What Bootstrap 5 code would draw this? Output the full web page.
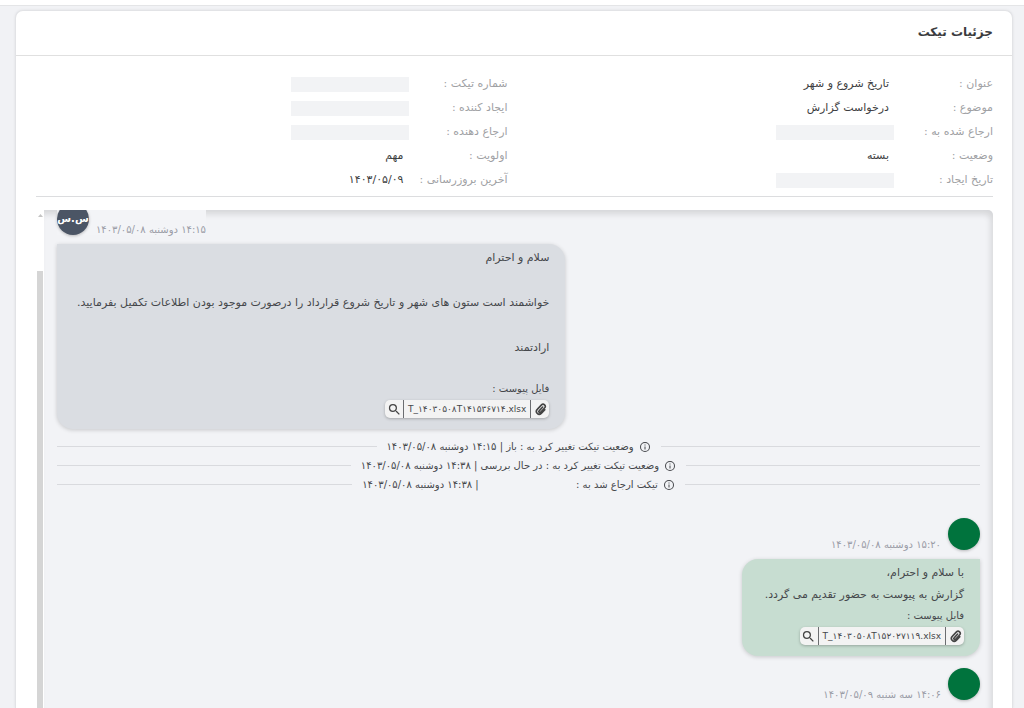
<!DOCTYPE html>
<html lang="fa" dir="rtl">
<head>
<meta charset="utf-8">
<meta name="viewport" content="width=device-width, initial-scale=1">
<title>جزئیات تیکت</title>
<link rel="stylesheet" href="https://cdn.jsdelivr.net/npm/bootstrap@5.3.0/dist/css/bootstrap.min.css">
<style>
  body { font-family: "DejaVu Sans", sans-serif; font-size: 11px; line-height: 22px; color: #45474b; background: #f1f2f5; }
  .topbar { height: 6px; background: #fff; border-bottom: 1px solid #e4e5e7; }
  .ticket { margin: 4px 11px 0 15px; border: 1px solid #e2e3e6; border-bottom: 0; border-radius: 8px 8px 0 0; box-shadow: 0 0 3px rgba(0,0,0,.08); min-height: 0; }
  .ticket-head { height: 45px; padding: 0 19px 2px; border-bottom: 1px solid #e0e0e0; }
  .ticket-head h1 { font-size: 12px; line-height: 20px; font-weight: 700; color: #3a3b3e; }
  .ticket-body { padding: 16px 19px 0 20px; min-height: 0; }
  .info { padding-bottom: 4px; border-bottom: 1px solid #dcdddf; }
  .info-col + .info-col { padding-right: 7px; }
  .info-col dl div { height: 24px; }
  .info dt { width: 104px; font-weight: 400; font-size: 11px; color: #a0a1a4; }
  .info dd { margin: 0; font-size: 11px; color: #3d3e41; }
  .hidden-value { width: 118px; height: 15px; background: #f2f3f5; margin-right: -5px !important; }
  .thread { margin-top: 13px; min-height: 0; }
  .chat { background: #f2f3f6; border-radius: 0 5px 0 0; box-shadow: inset -3px 5px 6px -1px rgba(0,0,0,.12); padding: 0 13px; }
  .rail { width: 8px; padding-top: 4px; }
  .rail .thumb { width: 6px; margin-top: 54px; background: #d5d5d5; }
  .avatar { width: 32px; height: 32px; background: #00733d; box-shadow: 0 1px 3px rgba(0,0,0,.25); }
  .avatar-dark { background: #4b5565; color: #fff; font-size: 10px; font-weight: 700; line-height: 20px; }
  .msg-head { gap: 7px; }
  .clipped { margin-top: -7px; background: #f3f4f7; }
  .stamp { font-size: 10px; line-height: 10px; color: #9a9ca6; }
  .clipped .stamp, .out-group .stamp { margin-bottom: 0; }
  .bubble { width: fit-content; margin-top: 9px; padding: 3px 16px 11px; box-shadow: 0 1px 4px rgba(0,0,0,.18); }
  .bubble-in { background: #dadde2; border-radius: 0 16px 16px 16px; padding-left: 20px; }
  .bubble-out { background: #c7ddd1; border-radius: 16px 0 16px 16px; padding-left: 23px; }
  .bubble p { margin: 0; font-size: 11px; }
  .bubble-in p { margin-bottom: 23px; }
  .bubble-in p:last-of-type { margin-bottom: 20px; }
  .file-label { font-size: 10px; line-height: 20px; }
  .file { width: fit-content; height: 18px; margin-top: 1px; background: #f3f3f3; border-radius: 5px; box-shadow: 0 1px 3px rgba(0,0,0,.25); overflow: hidden; }
  .file button { border: 0; background: none; padding: 0; width: 18px; height: 18px; color: #444; }
  .file a { font-size: 9px; line-height: 18px; padding: 0 4px; color: #45474b; text-decoration: none; border: solid #6b6d70; border-width: 0 1px; }
  .events { margin-top: 8px; }
  .event { height: 19px; font-size: 10px; gap: 10px; }
  .event::before, .event::after { content: ""; flex: 1; border-top: 1px solid #d9dade; }
  .event span { gap: 5px; }
  .redacted { display: inline-block; width: 91px; }
  .out-group { margin-top: 24px; }
  .out-group + .out-group { margin-top: 12px; }
</style>
</head>
<body class="vh-100 overflow-hidden d-flex flex-column">
<svg class="d-none">
  <symbol id="clip" viewBox="0 0 24 24"><path fill="none" stroke="currentColor" stroke-width="2.900" stroke-linecap="round" d="M16 7.500l-6.500 7a1.800 1.800 0 0 0 2.600 2.600L19.500 9.200a4 4 0 0 0-5.700-5.700L6 11.800a5.200 5.200 0 0 0 7.400 7.400L20 12.500"/></symbol>
  <symbol id="search" viewBox="0 0 24 24"><path fill="currentColor" d="M15.500 14h-.79l-.28-.27A6.470 6.470 0 0 0 16 9.500 6.500 6.500 0 1 0 9.500 16c1.610 0 3.090-.59 4.230-1.570l.27.28v.79l5 4.990L20.490 19l-4.990-5zm-6 0C7.010 14 5 11.990 5 9.500S7.010 5 9.500 5 14 7.010 14 9.500 11.990 14 9.500 14z"/></symbol>
  <symbol id="info" viewBox="0 0 24 24"><path fill="currentColor" d="M11 7h2v2h-2zm0 4h2v6h-2zm1-9a10 10 0 1 0 0 20 10 10 0 0 0 0-20zm0 18a8 8 0 1 1 0-16 8 8 0 0 1 0 16z"/></symbol>
</svg>
<header class="topbar flex-shrink-0"></header>
<main class="ticket bg-white flex-grow-1 d-flex flex-column">
  <div class="ticket-head d-flex align-items-center flex-shrink-0"><h1 class="m-0">جزئیات تیکت</h1></div>
  <div class="ticket-body flex-grow-1 d-flex flex-column">
    <section class="info row g-0 flex-shrink-0">
      <div class="info-col col-6"><dl class="m-0">
        <div class="d-flex align-items-center"><dt>عنوان :</dt><dd>تاریخ شروع و شهر</dd></div>
        <div class="d-flex align-items-center"><dt>موضوع :</dt><dd>درخواست گزارش</dd></div>
        <div class="d-flex align-items-center"><dt>ارجاع شده به :</dt><dd class="hidden-value"></dd></div>
        <div class="d-flex align-items-center"><dt>وضعیت :</dt><dd>بسته</dd></div>
        <div class="d-flex align-items-center"><dt>تاریخ ایجاد :</dt><dd class="hidden-value"></dd></div>
      </dl></div>
      <div class="info-col col-6"><dl class="m-0">
        <div class="d-flex align-items-center"><dt>شماره تیکت :</dt><dd class="hidden-value"></dd></div>
        <div class="d-flex align-items-center"><dt>ایجاد کننده :</dt><dd class="hidden-value"></dd></div>
        <div class="d-flex align-items-center"><dt>ارجاع دهنده :</dt><dd class="hidden-value"></dd></div>
        <div class="d-flex align-items-center"><dt>اولویت :</dt><dd>مهم</dd></div>
        <div class="d-flex align-items-center"><dt>آخرین بروزرسانی :</dt><dd>۱۴۰۳/۰۵/۰۹</dd></div>
      </dl></div>
    </section>
    <section class="thread flex-grow-1 d-flex">
      <div class="chat flex-grow-1 overflow-hidden">
        <article class="d-flex flex-column align-items-end">
          <div class="msg-head clipped d-flex flex-row-reverse align-items-end">
            <div class="avatar avatar-dark rounded-circle d-flex align-items-center justify-content-center">س.س</div>
            <time class="stamp">۱۴:۱۵ دوشنبه ۱۴۰۳/۰۵/۰۸</time>
          </div>
          <div class="bubble bubble-in">
            <p>سلام و احترام</p>
            <p>خواشمند است ستون های شهر و تاریخ شروع قرارداد را درصورت موجود بودن اطلاعات تکمیل بفرمایید.</p>
            <p>ارادتمند</p>
            <div class="file-label">فایل پیوست :</div>
            <div class="file d-flex">
              <button type="button" aria-label="پیوست" class="d-flex align-items-center justify-content-center"><svg width="13" height="13"><use href="#clip"/></svg></button>
              <a href="#" dir="ltr">T_۱۴۰۳۰۵۰۸T۱۴۱۵۳۶۷۱۴.xlsx</a>
              <button type="button" aria-label="مشاهده" class="d-flex align-items-center justify-content-center"><svg width="15" height="15"><use href="#search"/></svg></button>
            </div>
          </div>
        </article>
        <div class="events">
          <div class="event d-flex align-items-center"><span class="d-flex align-items-center"><svg width="12" height="12"><use href="#info"/></svg><bdi>وضعیت تیکت تغییر کرد به : باز | ۱۴:۱۵ دوشنبه ۱۴۰۳/۰۵/۰۸</bdi></span></div>
          <div class="event d-flex align-items-center"><span class="d-flex align-items-center"><svg width="12" height="12"><use href="#info"/></svg><bdi>وضعیت تیکت تغییر کرد به : در حال بررسی | ۱۴:۳۸ دوشنبه ۱۴۰۳/۰۵/۰۸</bdi></span></div>
          <div class="event d-flex align-items-center"><span class="d-flex align-items-center"><svg width="12" height="12"><use href="#info"/></svg><bdi>تیکت ارجاع شد به : <i class="redacted"></i> | ۱۴:۳۸ دوشنبه ۱۴۰۳/۰۵/۰۸</bdi></span></div>
        </div>
        <article class="out-group">
          <div class="msg-head d-flex align-items-end"><div class="avatar rounded-circle"></div><time class="stamp">۱۵:۲۰ دوشنبه ۱۴۰۳/۰۵/۰۸</time></div>
          <div class="bubble bubble-out">
            <p>با سلام و احترام،</p>
            <p>گزارش به پیوست به حضور تقدیم می گردد.</p>
            <div class="file-label">فایل پیوست :</div>
            <div class="file d-flex">
              <button type="button" aria-label="پیوست" class="d-flex align-items-center justify-content-center"><svg width="13" height="13"><use href="#clip"/></svg></button>
              <a href="#" dir="ltr">T_۱۴۰۳۰۵۰۸T۱۵۲۰۲۷۱۱۹.xlsx</a>
              <button type="button" aria-label="مشاهده" class="d-flex align-items-center justify-content-center"><svg width="15" height="15"><use href="#search"/></svg></button>
            </div>
          </div>
        </article>
        <article class="out-group">
          <div class="msg-head d-flex align-items-end"><div class="avatar rounded-circle"></div><time class="stamp">۱۴:۰۶ سه شنبه ۱۴۰۳/۰۵/۰۹</time></div>
        </article>
      </div>
      <div class="rail d-flex flex-column align-items-center"><svg width="5" height="3" class="flex-shrink-0"><path d="M0 3L2.500 0 5 3z" fill="#c4c4c4"/></svg><div class="thumb flex-grow-1"></div></div>
    </section>
  </div>
</main>
<script src="https://cdn.jsdelivr.net/npm/bootstrap@5.3.0/dist/js/bootstrap.bundle.min.js"></script>
</body>
</html>
